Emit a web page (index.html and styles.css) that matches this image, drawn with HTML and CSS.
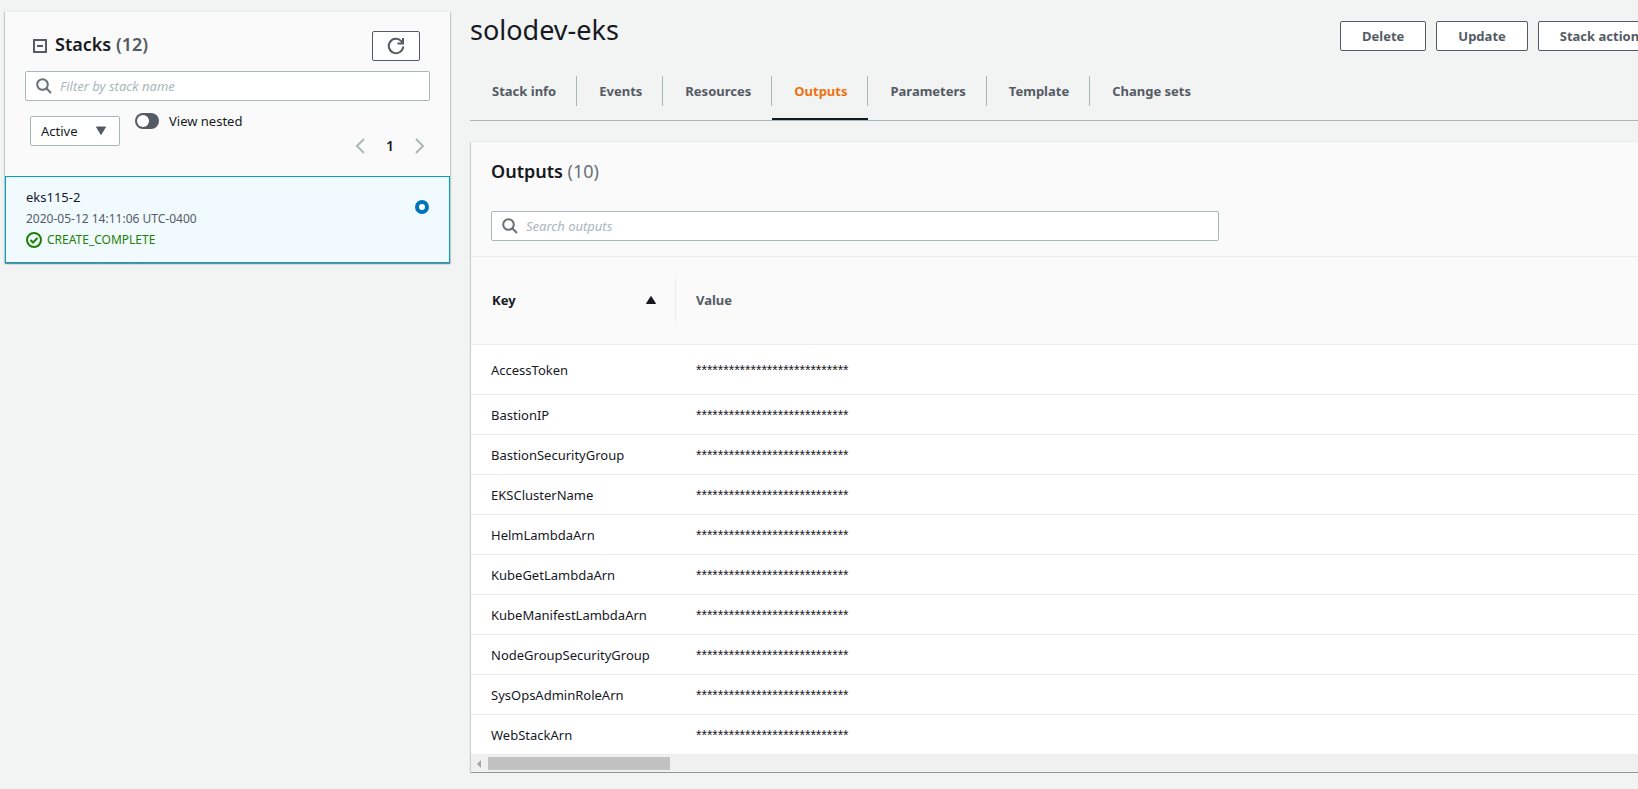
FILE: index.html
```html
<!DOCTYPE html>
<html lang="en">
<head>
<meta charset="utf-8">
<title>CloudFormation - Stack solodev-eks</title>
<link rel="stylesheet" href="styles.css">
</head>
<body>
<div class="layout">
  <aside class="stacks">
    <div class="stacks-top">
      <div class="stacks-head">
        <button class="collapse" type="button" aria-label="Collapse stacks">
          <svg width="14" height="14" viewBox="0 0 14 14" fill="none" stroke="currentColor" stroke-width="2"><path d="M1 1h12v12H1zM4 7h6"/></svg>
        </button>
        <h2 class="stacks-title">Stacks <span class="count">(12)</span></h2>
        <button class="refresh" type="button" aria-label="Refresh">
          <svg width="18" height="18" viewBox="0 0 18 18" fill="none" stroke="currentColor" stroke-width="2"><path d="M16.2 9.5A7.2 7.2 0 1 1 14.3 4.1L16 6"/><path d="M16 1v5.5h-5.500"/></svg>
        </button>
      </div>
      <label class="search">
        <svg class="search-icon" width="16" height="16" viewBox="0 0 16 16" fill="none" stroke="currentColor" stroke-width="2"><circle cx="6.500" cy="6.500" r="5.300"/><path d="M10.300 10.300L15 15"/></svg>
        <input class="search-input" type="text" placeholder="Filter by stack name" aria-label="Filter by stack name">
      </label>
      <div class="filters">
        <div class="select">
          <select class="select-input" aria-label="Stack status"><option>Active</option></select>
          <svg class="select-arrow" width="12" height="10" viewBox="0 0 12 10" fill="currentColor" stroke="currentColor" stroke-linejoin="round"><path d="M1.500 1h9L6 8.500z"/></svg>
        </div>
        <label class="nested"><input class="toggle" type="checkbox">View nested</label>
        <nav class="pages" aria-label="Stack pages">
          <button class="page-arrow" type="button" aria-label="Previous page"><svg width="10" height="16" viewBox="0 0 10 16" fill="none" stroke="currentColor" stroke-width="2"><path d="M9 1L2 8l7 7"/></svg></button>
          <button class="page-number" type="button">1</button>
          <button class="page-arrow" type="button" aria-label="Next page"><svg width="10" height="16" viewBox="0 0 10 16" fill="none" stroke="currentColor" stroke-width="2"><path d="M1 1l7 7-7 7"/></svg></button>
        </nav>
      </div>
    </div>
    <label class="stack-item">
      <span class="stack-text">
        <span class="stack-name">eks115-2</span>
        <span class="stack-date">2020-05-12 14:11:06 UTC-0400</span>
        <span class="stack-status">
          <svg width="16" height="16" viewBox="0 0 16 16" fill="none" stroke="currentColor" stroke-width="2"><circle cx="8" cy="8" r="7"/><path d="M4.500 8l2.500 2.500L11.500 6"/></svg>
          CREATE_COMPLETE
        </span>
      </span>
      <input class="radio" type="radio" name="stack" checked>
    </label>
  </aside>

  <main class="detail">
    <header class="detail-head">
      <h1 class="detail-title">solodev-eks</h1>
      <div class="actions">
        <button class="button" type="button">Delete</button>
        <button class="button" type="button">Update</button>
        <button class="button" type="button">Stack actions</button>
      </div>
    </header>
    <nav class="tabs">
      <a class="tab" href="#info">Stack info</a>
      <a class="tab" href="#events">Events</a>
      <a class="tab" href="#resources">Resources</a>
      <a class="tab tab-active" href="#outputs" aria-current="page">Outputs</a>
      <a class="tab" href="#parameters">Parameters</a>
      <a class="tab" href="#template">Template</a>
      <a class="tab" href="#changesets">Change sets</a>
    </nav>
    <section class="outputs">
      <div class="outputs-head">
        <h2 class="outputs-title">Outputs <span class="count count-light">(10)</span></h2>
        <label class="search search-outputs">
          <svg class="search-icon" width="16" height="16" viewBox="0 0 16 16" fill="none" stroke="currentColor" stroke-width="2"><circle cx="6.500" cy="6.500" r="5.300"/><path d="M10.300 10.300L15 15"/></svg>
          <input class="search-input" type="text" placeholder="Search outputs" aria-label="Search outputs">
        </label>
      </div>
      <table class="table">
        <thead>
          <tr>
            <th class="key-head" scope="col"><span class="key-sort">Key <svg width="12" height="10" viewBox="0 0 12 10" fill="currentColor" stroke="currentColor" stroke-linejoin="round"><path d="M1.500 8.500h9L6 1.500z"/></svg></span></th>
            <th class="value-head" scope="col">Value</th>
          </tr>
        </thead>
        <tbody>
          <tr><td>AccessToken</td><td class="value">****************************</td></tr>
          <tr><td>BastionIP</td><td class="value">****************************</td></tr>
          <tr><td>BastionSecurityGroup</td><td class="value">****************************</td></tr>
          <tr><td>EKSClusterName</td><td class="value">****************************</td></tr>
          <tr><td>HelmLambdaArn</td><td class="value">****************************</td></tr>
          <tr><td>KubeGetLambdaArn</td><td class="value">****************************</td></tr>
          <tr><td>KubeManifestLambdaArn</td><td class="value">****************************</td></tr>
          <tr><td>NodeGroupSecurityGroup</td><td class="value">****************************</td></tr>
          <tr><td>SysOpsAdminRoleArn</td><td class="value">****************************</td></tr>
          <tr><td>WebStackArn</td><td class="value">****************************</td></tr>
        </tbody>
      </table>
      <div class="scrollbar">
        <svg width="4" height="8" viewBox="0 0 4 8" fill="#a3a3a3"><path d="M4 0v8L0 4z"/></svg>
        <div class="scroll-thumb"></div>
      </div>
    </section>
  </main>
</div>
</body>
</html>
```
FILE: styles.css
```css
*, *::before, *::after { box-sizing: border-box; }

body {
  margin: 0;
  background: #f2f3f3;
  color: #16191f;
  font-family: "Noto Sans", "Open Sans", sans-serif;
  font-size: 13px;
  line-height: 20px;
}

h1, h2 { margin: 0; }

button, input, select { font: inherit; color: inherit; margin: 0; }

button { cursor: pointer; }

svg { display: block; flex: none; }

.layout {
  display: flex;
  align-items: flex-start;
  gap: 20px;
  padding: 11px 0 0 5px;
}

/* Stack list */

.stacks {
  flex: none;
  width: 445px;
  background: #fafafa;
  border-top: 1px solid #eaeded;
  box-shadow: 0 1px 1px 0 rgba(0, 28, 36, 0.3), 1px 1px 1px 0 rgba(0, 28, 36, 0.15), -1px 1px 1px 0 rgba(0, 28, 36, 0.15);
}

.stacks-top { padding: 19px 20px 20px; }

.stacks-head {
  display: flex;
  align-items: center;
  gap: 8px;
  padding: 0 10px 0 8px;
}

.collapse {
  padding: 0;
  border: 0;
  background: none;
  color: #545b64;
}

.stacks-title, .outputs-title {
  font-size: 18px;
  line-height: 24px;
  font-weight: 600;
}

.stacks-title { padding-bottom: 4px; }

.count { color: #545b64; }
.count-light { color: #687078; font-weight: 400; }

.refresh {
  display: flex;
  align-items: center;
  justify-content: center;
  width: 48px;
  height: 30px;
  margin-left: auto;
  padding: 0;
  border: 1px solid #545b64;
  border-radius: 2px;
  background: #fff;
  color: #545b64;
}

.search {
  display: flex;
  align-items: center;
  gap: 8px;
  height: 30px;
  margin-top: 10px;
  padding: 0 10px;
  border: 1px solid #aab7b8;
  border-radius: 2px;
  background: #fff;
}

.search-icon { color: #687078; }

.search-input {
  flex: 1;
  min-width: 0;
  padding: 0;
  border: 0;
  outline: 0;
  background: none;
}

.search-input::placeholder {
  color: #aab7b8;
  font-style: italic;
  opacity: 1;
}

.filters {
  display: flex;
  align-items: flex-start;
  padding: 10px 5px 0;
}

.select {
  display: grid;
  align-items: center;
  width: 90px;
  margin-top: 5px;
}

.select-input {
  grid-area: 1 / 1;
  width: 100%;
  height: 30px;
  padding: 0 10px;
  border: 1px solid #aab7b8;
  border-radius: 2px;
  background: #fff;
  appearance: none;
}

.select-arrow {
  grid-area: 1 / 1;
  justify-self: end;
  margin-right: 13px;
  color: #545b64;
  pointer-events: none;
}

.nested {
  display: flex;
  align-items: center;
  gap: 10px;
  margin-left: 15px;
}

.toggle {
  display: flex;
  width: 24px;
  height: 16px;
  padding: 2px;
  border-radius: 8px;
  background: #545b64;
  appearance: none;
}

.toggle::before {
  content: "";
  width: 12px;
  height: 12px;
  border-radius: 50%;
  background: #fff;
}

.toggle:checked { justify-content: flex-end; }

.pages {
  display: flex;
  align-items: center;
  gap: 21px;
  margin: 25px 0 0 auto;
}

.page-arrow, .page-number {
  padding: 0;
  border: 0;
  background: none;
}

.page-arrow { color: #aab7b8; }
.page-number { font-size: 14px; font-weight: 600; }

.stack-item {
  display: flex;
  align-items: flex-start;
  justify-content: space-between;
  padding: 9px 20px 12px;
  border: 1px solid #00a1c9;
  background: #f1faff;
}

.stack-text { display: grid; }

.stack-name { line-height: 22px; }

.stack-date {
  color: #545b64;
  font-size: 12px;
  line-height: 22px;
}

.stack-status {
  display: flex;
  align-items: center;
  gap: 5px;
  color: #1d8102;
  font-size: 12px;
}

.radio {
  width: 14px;
  height: 14px;
  margin-top: 14px;
  border: 4px solid #0073bb;
  border-radius: 50%;
  background: #fff;
  appearance: none;
}

/* Stack detail */

.detail {
  flex: 1;
  min-width: 0;
}

.detail-head {
  display: flex;
  align-items: flex-start;
  justify-content: space-between;
  height: 55px;
}

.detail-title {
  font-size: 27px;
  line-height: 38px;
  font-weight: 400;
}

.actions {
  display: flex;
  gap: 10px;
  width: 298px;
  padding-top: 10px;
  overflow: hidden;
}

.button {
  flex: none;
  height: 30px;
  padding: 0 21px;
  border: 1px solid #545b64;
  border-radius: 2px;
  background: #fff;
  color: #545b64;
  font-weight: 700;
}

.tabs {
  display: flex;
  border-bottom: 1px solid #aab7b8;
}

.tab {
  display: flex;
  padding: 10px 0 12px 1px;
  border-bottom: 2px solid transparent;
  color: #545b64;
  font-weight: 700;
  line-height: 30px;
  text-decoration: none;
}

.tab::before, .tab::after {
  content: "";
  width: 21px;
}

.tab:not(:last-child)::after { border-right: 1px solid #aab7b8; }

.tab-active {
  border-bottom-color: #16191f;
  color: #ec7211;
}

.outputs {
  margin-top: 20px;
  margin-left: 1px;
  border-top: 1px solid #eaeded;
  border-bottom: 1px solid #919597;
  background: #fafafa;
  box-shadow: 0 1px 1px 0 rgba(0, 28, 36, 0.15), -1px 1px 1px 0 rgba(0, 28, 36, 0.15);
}

.outputs-head { padding: 17px 20px 15px; }

.search-outputs {
  max-width: 728px;
  margin-top: 28px;
}

.table {
  width: 100%;
  border-collapse: collapse;
  table-layout: fixed;
}

.table th {
  padding: 21px 0 22px;
  border-top: 1px solid #eaeded;
  border-bottom: 1px solid #eaeded;
  color: #545b64;
  font-weight: 700;
  text-align: left;
}

.table .key-head {
  width: 205px;
  color: #16191f;
}

.key-sort {
  display: flex;
  align-items: center;
  justify-content: space-between;
  padding: 12px 18px 12px 21px;
  border-right: 1px solid #eaeded;
}

.table .value-head { padding-left: 20px; }

.table td {
  height: 40px;
  padding: 0 0 0 20px;
  border-bottom: 1px solid #eaeded;
  background: #fff;
}

.table tbody tr:first-child td { height: 50px; }

.table .value { font-family: "Liberation Sans", Arial, sans-serif; font-size: 14px; }

.scrollbar {
  display: flex;
  align-items: center;
  gap: 7px;
  height: 17px;
  padding-left: 6px;
  background: #f0f0f0;
}

.scroll-thumb {
  width: 182px;
  height: 13px;
  background: #c1c1c1;
}
```
